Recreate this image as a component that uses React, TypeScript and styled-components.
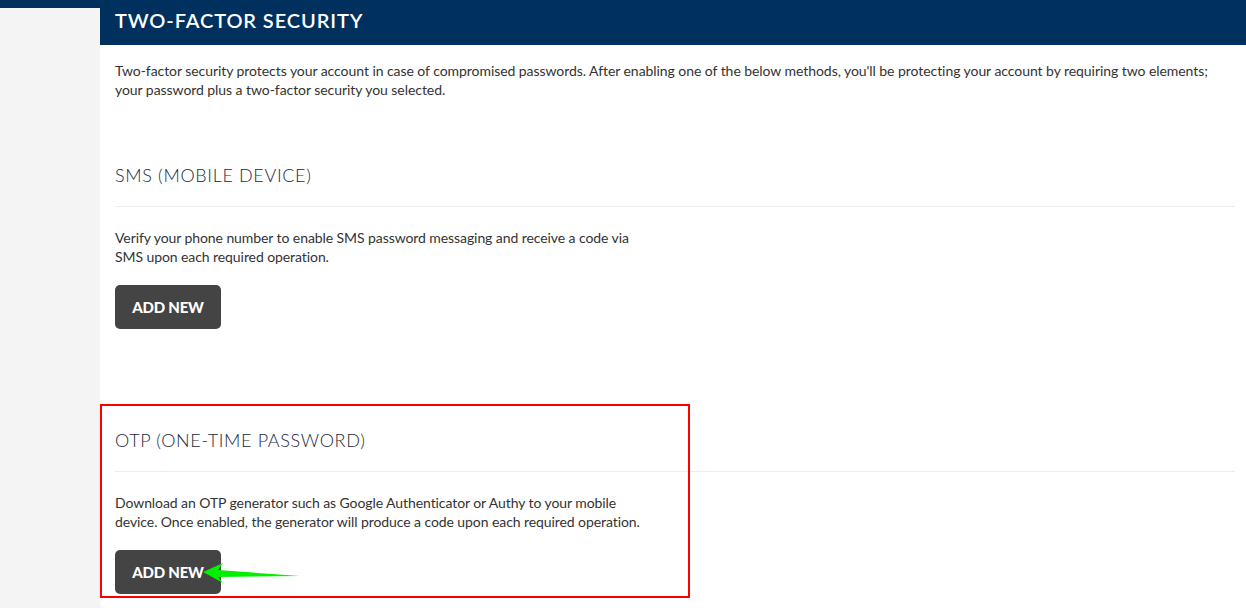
import styled, { createGlobalStyle } from "styled-components";

const GlobalStyle = createGlobalStyle`
  html, body {
    margin: 0;
    padding: 0;
    background: #ffffff;
    font-family: Lato, "Open Sans", sans-serif;
    color: #333333;
  }
  * {
    box-sizing: border-box;
  }
`;

interface Method {
  title: string;
  text: string;
  highlighted?: boolean;
}

const methods: Method[] = [
  {
    title: "SMS (Mobile Device)",
    text: "Verify your phone number to enable SMS password messaging and receive a code via SMS upon each required operation.",
  },
  {
    title: "OTP (One-Time Password)",
    text: "Download an OTP generator such as Google Authenticator or Authy to your mobile device. Once enabled, the generator will produce a code upon each required operation.",
    highlighted: true,
  },
];

const App = () => {
  return (
    <>
      <GlobalStyle />
      <Page>
        <TopStrip />
        <Layout>
          <Sidebar />
          <Main>
            <Header>
              <Title>Two-Factor Security</Title>
            </Header>
            <Body>
              <Intro>
                Two-factor security protects your account in case of compromised passwords. After
                enabling one of the below methods, you'll be protecting your account by requiring two
                elements; your password plus a two-factor security you selected.
              </Intro>
              {methods.map((m) => (
                <Section key={m.title}>
                  {m.highlighted && <Highlight />}
                  <SectionTitle>{m.title}</SectionTitle>
                  <Divider />
                  <Description>{m.text}</Description>
                  <ButtonRow>
                    <AddButton type="button">ADD NEW</AddButton>
                    {m.highlighted && (
                      <Arrow width="100" height="24" viewBox="0 0 100 24">
                        <polygon points="0,10 20,1 15,8 97,14 15,15 20,21" fill="#00f000" />
                      </Arrow>
                    )}
                  </ButtonRow>
                </Section>
              ))}
            </Body>
          </Main>
        </Layout>
      </Page>
    </>
  );
};

export default App;

const Page = styled.div`
  width: 1246px;
  height: 608px;
  overflow: hidden;
  display: flex;
  flex-direction: column;
`;

const TopStrip = styled.div`
  height: 8px;
  flex-shrink: 0;
  background: #00305e;
`;

const Layout = styled.div`
  flex: 1;
  display: flex;
`;

const Sidebar = styled.div`
  width: 100px;
  flex-shrink: 0;
  background: #f4f4f4;
`;

const Main = styled.div`
  flex: 1;
  display: flex;
  flex-direction: column;
`;

const Header = styled.div`
  height: 37px;
  background: #00305e;
  padding: 0 15px;
  display: flex;
  align-items: flex-start;
`;

const Title = styled.h1`
  margin: -1px 0 0;
  font-size: 20px;
  font-weight: 600;
  line-height: 26px;
  letter-spacing: 0.9px;
  color: #ffffff;
  text-transform: uppercase;
`;

const Body = styled.div`
  padding: 0 11px 0 15px;
`;

const Intro = styled.p`
  margin: 16px 0 0;
  font-size: 14px;
  line-height: 19px;
  letter-spacing: -0.06px;
  color: #333333;
`;

const Section = styled.section`
  position: relative;
  margin-top: 64px;

  & + & {
    margin-top: 99px;
  }
`;

const Highlight = styled.div`
  position: absolute;
  left: -15px;
  top: -24px;
  width: 590px;
  height: 194px;
  border: 2px solid #ff0000;
  pointer-events: none;
`;

const SectionTitle = styled.h2`
  margin: 0;
  font-size: 18px;
  font-weight: 300;
  line-height: 24px;
  letter-spacing: 0.65px;
  color: #1c2a3c;
  text-transform: uppercase;
`;

const Divider = styled.hr`
  margin: 19px 0 0;
  border: 0;
  border-top: 1px solid #ececec;
`;

const Description = styled.p`
  margin: 21px 0 0;
  max-width: 535px;
  font-size: 14px;
  line-height: 19px;
  letter-spacing: -0.08px;
  color: #333333;
`;

const ButtonRow = styled.div`
  position: relative;
  margin-top: 19px;
  display: flex;
`;

const AddButton = styled.button`
  width: 106px;
  height: 44px;
  border: 0;
  border-radius: 5px;
  background: #444444;
  color: #ffffff;
  font-family: Lato, "Open Sans", sans-serif;
  font-size: 15px;
  font-weight: 900;
  letter-spacing: -0.2px;
  cursor: pointer;
`;

const Arrow = styled.svg`
  position: absolute;
  left: 88px;
  top: 12px;
`;
